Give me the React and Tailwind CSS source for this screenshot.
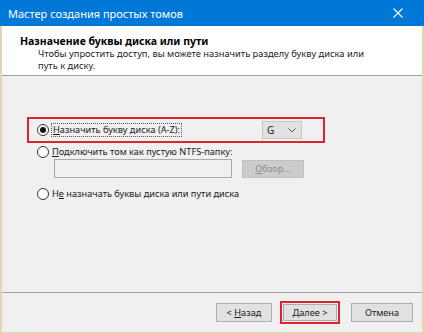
const Radio = ({ checked }) => (
    <span className="w-[12px] h-[12px] rounded-full border border-[#333] bg-white flex items-center justify-center shrink-0">
        {checked && <span className="w-[6px] h-[6px] rounded-full bg-[#111]" />}
    </span>
);

const App = () => {
    return (
        <div
            className="w-[424px] h-[334px] flex flex-col bg-[#f0f0f0] text-[#1a1a1a] overflow-hidden"
            style={{ fontFamily: '"Noto Sans", "Open Sans", sans-serif' }}
        >
            {/* title bar */}
            <div className="h-[26px] bg-[#0078d7] flex items-center justify-between pl-[8px] pr-[21px] shrink-0">
                <span className="text-white text-[11px] leading-none">Мастер создания простых томов</span>
                <svg width="10" height="10" viewBox="0 0 10 10" className="text-white">
                    <path d="M0.5 0.5 L9.5 9.5 M9.5 0.5 L0.5 9.5" stroke="currentColor" strokeWidth="1.1" />
                </svg>
            </div>

            <div className="flex-1 flex flex-col border-l-2 border-r-2 border-b-2 border-[#e8d3b0]">
                {/* header */}
                <div className="h-[50px] bg-white border-b border-[#a0a0a0] pl-[18px] pt-[9px] shrink-0">
                    <div className="text-[10.5px] font-bold leading-[13px] text-black">Назначение буквы диска или пути</div>
                    <div className="pl-[18px] text-[9.3px] leading-[12px] text-[#222]">
                        Чтобы упростить доступ, вы можете назначить разделу букву диска или
                        <br />
                        путь к диску.
                    </div>
                </div>

                {/* body */}
                <div className="flex-1 pl-[25px] pt-[41px] text-[9.2px]">
                    <div className="w-[298px] h-[26px] border-2 border-[#e0232e] flex items-center pl-[8px]">
                        <Radio checked />
                        <span className="ml-[2px] px-[1px] border border-dotted border-[#555] leading-[12px]">
                            <u>Н</u>азначить букву диска (A-Z):
                        </span>
                        <div className="ml-auto mr-[21px] w-[40px] h-[18px] bg-[#e1e1e1] border border-[#c8c8c8] flex items-center justify-between pl-[4px] pr-[5px]">
                            <span className="text-[10px]">G</span>
                            <svg width="8" height="5" viewBox="0 0 8 5">
                                <path d="M0.5 0.5 L4 4 L7.5 0.5" stroke="#555" fill="none" strokeWidth="1" />
                            </svg>
                        </div>
                    </div>

                    <div className="flex items-center pl-[10px] mt-[2px] h-[14px]">
                        <Radio />
                        <span className="ml-[3px]">
                            <u>П</u>одключить том как пустую NTFS-папку:
                        </span>
                    </div>
                    <div className="flex items-center pl-[27px] gap-[10px]">
                        <div className="w-[178px] h-[19px] bg-[#f0f0f0] border border-[#a9a9a9]" />
                        <div className="w-[62px] h-[18px] bg-[#cccccc] border border-[#bfbfbf] flex items-center justify-center text-[#8a8a8a]">
                            <span>
                                <u>О</u>бзор...
                            </span>
                        </div>
                    </div>

                    <div className="flex items-center pl-[10px] mt-[9px] h-[14px]">
                        <Radio />
                        <span className="ml-[3px]">
                            Н<u>е</u> назначать буквы диска или пути диска
                        </span>
                    </div>
                </div>

                {/* footer */}
                <div className="h-[40px] border-t border-[#a0a0a0] flex items-center justify-end pr-[9px] shrink-0 text-[9.2px]">
                    <div className="w-[56px] h-[19px] bg-[#e1e1e1] border border-[#adadad] flex items-center justify-center">
                        <span>
                            &lt; <u>Н</u>азад
                        </span>
                    </div>
                    <div className="ml-[8px] p-[1px] border-2 border-[#e0232e]">
                        <div className="w-[54px] h-[17px] bg-[#e1e1e1] border border-[#adadad] flex items-center justify-center">
                            <span>
                                <u>Д</u>алее &gt;
                            </span>
                        </div>
                    </div>
                    <div className="ml-[11px] w-[62px] h-[19px] bg-[#e1e1e1] border border-[#adadad] flex items-center justify-center">
                        Отмена
                    </div>
                </div>
            </div>
        </div>
    );
};

export default App;
